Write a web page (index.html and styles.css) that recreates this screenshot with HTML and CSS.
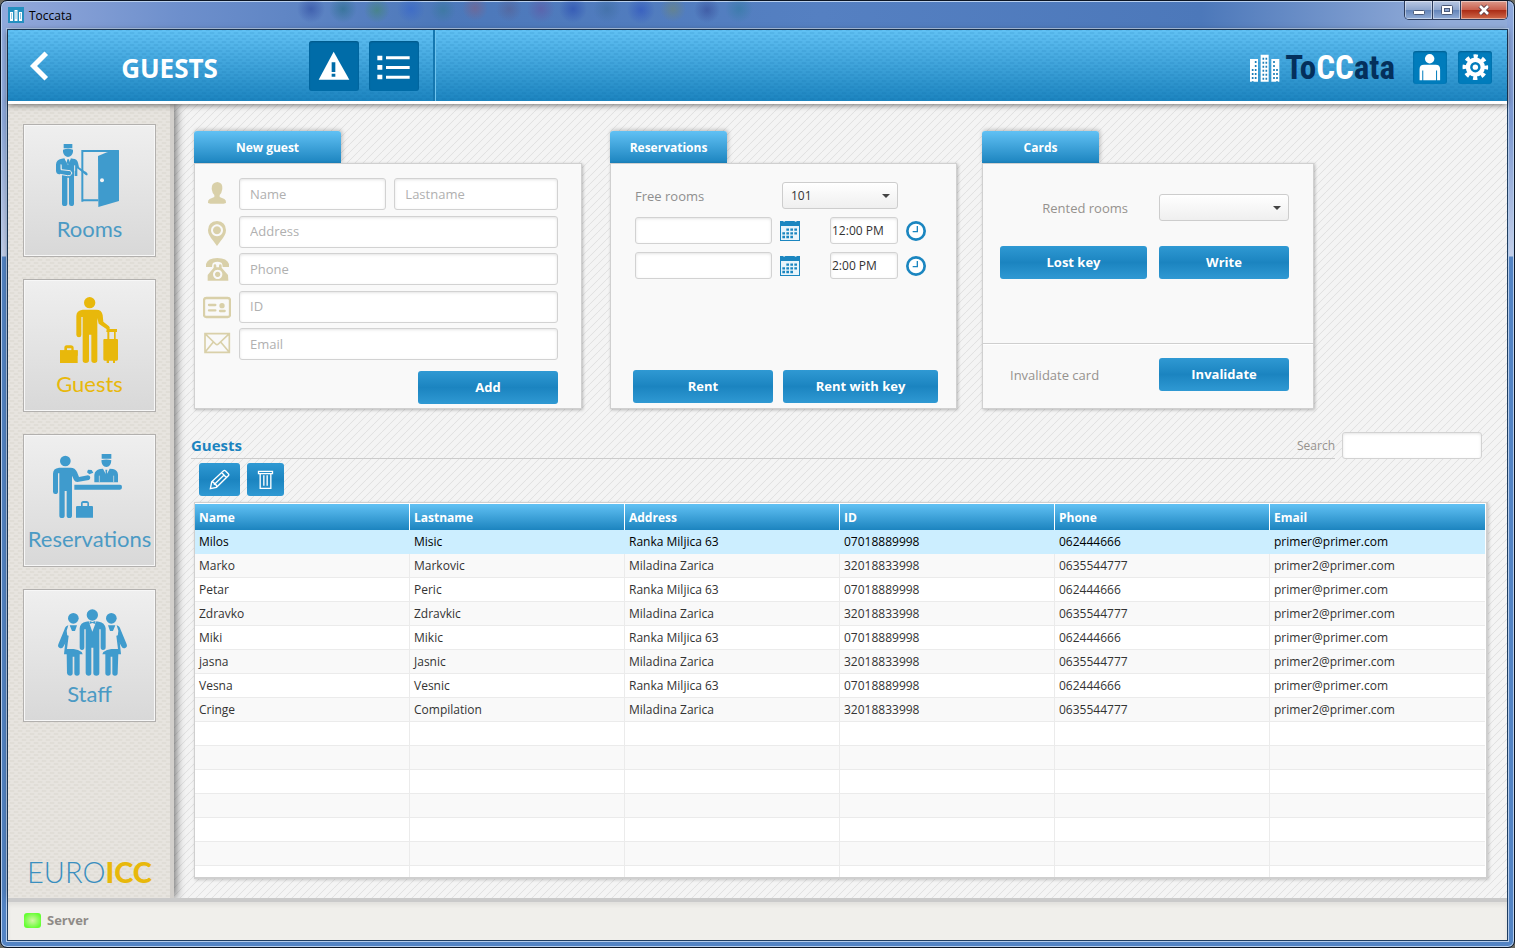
FILE: index.html
```html
<!DOCTYPE html>
<html lang="en">
<head>
<meta charset="utf-8">
<title>Toccata</title>
<link rel="stylesheet" href="styles.css">
</head>
<body>
<div class="window">
  <div class="titlebar">
    <svg class="app-icon" viewBox="0 0 16 16" aria-hidden="true">
      <rect width="16" height="16" fill="#2490c0"/>
      <path d="M2 5h3v9H2zM6.500 3h3v11h-3zM11 5h3v9h-3z" fill="#fff"/>
      <path d="M3 7h1M3 9h1M3 11h1M7.500 5h1M7.500 7h1M7.500 9h1M7.500 11h1M12 7h1M12 9h1M12 11h1" stroke="#2490c0"/>
    </svg>
    <span class="window-name">Toccata</span>
    <div class="window-buttons">
      <button class="win-btn" aria-label="Minimize"><svg width="14" height="12" viewBox="0 0 14 12"><rect x="1.500" y="6.500" width="11" height="4" rx="1" fill="#fff" stroke="#4b5a78"/></svg></button>
      <button class="win-btn" aria-label="Maximize"><svg width="14" height="12" viewBox="0 0 14 12"><rect x="1.500" y="1.500" width="11" height="9" rx="1" fill="#fff" stroke="#4b5a78"/><rect x="4.500" y="4.500" width="5" height="3" fill="#8ea6d0" stroke="#4b5a78"/></svg></button>
      <button class="win-btn win-close" aria-label="Close"><svg width="14" height="12" viewBox="0 0 14 12"><path d="M3 2l8 8M11 2l-8 8" stroke="#5b3a44" stroke-width="4.500"/><path d="M3 2l8 8M11 2l-8 8" stroke="#fff" stroke-width="2.600"/></svg></button>
    </div>
  </div>

  <div class="client">
    <header class="header">
      <div class="header-left">
        <button class="back" aria-label="Back"><svg width="20" height="32" viewBox="0 0 20 32"><path d="M15.500 5L4.500 16l11 11" fill="none" stroke="#fff" stroke-width="5" stroke-linecap="square" stroke-linejoin="miter"/></svg></button>
        <h1 class="page-title">GUESTS</h1>
        <button class="head-btn" aria-label="Alerts"><svg viewBox="927 123 150 150"><path d="M1001 155l47 84h-92z" fill="#fff"/><path d="M995 187h11v29h-11zM995 221h11v9h-11z" fill="#006ca8"/></svg></button>
        <button class="head-btn" aria-label="List"><svg viewBox="1107 123 150 150"><path d="M1132 167h15v14h-15zM1132 195h15v14h-15zM1132 224h15v14h-15zM1158 169h71v9h-71zM1158 198h71v9h-71zM1158 227h71v9h-71z" fill="#fff"/></svg></button>
      </div>
      <div class="header-right">
        <div class="logo">
          <svg class="logo-mark" viewBox="114 157 90 84" aria-hidden="true">
            <path d="M114 172h24v68h-24zM146 159h24v81h-24zM178 172h24v68h-24z" fill="#fff"/>
            <g stroke="#1d7fb8" stroke-width="5" stroke-dasharray="6 6"><path d="M131 178v60M122 202v38M154 168v70M163 168v70M186 178v60M195 202v38"/></g>
          </svg>
          <span class="logo-text">To<span class="logo-white">CC</span>ata</span>
        </div>
        <button class="small-btn" aria-label="User"><svg viewBox="596 154 100 98"><circle cx="645" cy="177" r="14" fill="#fff"/><path d="M615 241v-33q0-13 13-13h35q13 0 13 13v33h-9v-29h-3v29h-38v-29h-3v29z" fill="#fff"/></svg></button>
        <button class="small-btn" aria-label="Settings"><svg viewBox="731 154 100 98"><circle cx="782" cy="202" r="31" fill="none" stroke="#fff" stroke-width="14" stroke-dasharray="12.200 12.150" stroke-dashoffset="6"/><circle cx="782" cy="202" r="22" fill="none" stroke="#fff" stroke-width="13"/><circle cx="782" cy="202" r="8" fill="#fff"/></svg></button>
      </div>
    </header>

    <div class="middle">
      <nav class="sidebar">
        <a class="tile" href="#rooms">
          <svg viewBox="162 126 213 210" fill="#3f9bcd" aria-hidden="true">
            <path d="M191 132h26v13h-26zM189 149q15-5 30 0v7q-3 14-15 15-12-1-15-15z"/>
            <path d="M247 305V153h108M247 301h48" fill="none" stroke="#3f9bcd" stroke-width="6"/>
            <path d="M294 168l27-11 36-7v153l-62 18z"/><circle cx="306" cy="241" r="6" fill="#f4f4f4"/>
            <path d="M186 224h36v87q0 7-8 7-7 0-7-7v-78h-5v78q0 7-8 7t-8-7z"/>
            <path d="M185 176q-17 3-17 18v18q0 9 10 11l27 5q11 0 11-10-1-5-6-5l-27-3v-15l4 1v10l37 3v19h8v-23l25 20q8 4 5-5-3-4-8-6l-17-12-3-14q-3-12-15-12l-8-1-7 18-10-18z"/>
            <path d="M184 190l38 0v37h-36v-8z"/>
            <path d="M193 175l11 21 9-21z" fill="#ececec"/>
            <path d="M202 178h5l2 9-5 9-4-9z"/>
            <path d="M183 193v16l27 3q7 3 5 10-4 7-13 5l-22-4M224 196v16" fill="none" stroke="#ececec" stroke-width="3"/>
          </svg>
          <span>Rooms</span>
        </a>
        <a class="tile active" href="#guests">
          <svg viewBox="162 591 213 210" fill="#e8b80b" aria-hidden="true">
            <circle cx="269" cy="608" r="17"/>
            <path d="M248 629h41q16 0 19 16l2 20 17 14q6 8-2 9-5 1-9-3l-20-14-4-17v127q0 8-9 8t-9-8v-77h-7v77q0 8-10 8-9 0-9-8V651h-4v54q0 7-7 7t-8-7v-57q0-17 19-19z"/>
            <path d="M320 687h31v9h-4v21h-5v-21h-14v21h-6v-21h-3zM313 717h38q3 0 3 3v58q0 4-4 4h-5v7h-6v-7h-12v7h-7v-7h-6q-4 0-4-4v-58q0-3 3-3zM180 751h13v-7q0-8 7-8h12q9 0 9 8v7h12v16h-53zm21 0h13v-6h-13z" fill-rule="evenodd"/>
            <path d="M180 751h53v38h-53z"/>
          </svg>
          <span>Guests</span>
        </a>
        <a class="tile" href="#reservations">
          <svg viewBox="162 96 213 210" fill="#3f9bcd" aria-hidden="true">
            <circle cx="196" cy="123" r="16"/>
            <path d="M177 143h35q13 0 19 13l6 15 27-5q9 1 6 10-2 5-8 5l-30 5q-7 0-10-6l-6-13v120q0 7-8 7t-8-7v-74h-6v74q0 7-8 7t-8-7V160h-4v55q0 7-8 7-7 0-7-7v-54q0-16 18-18z"/>
            <path d="M264 149l11 1 5 8-12 5-7-6zM223 194h137q6 0 6 7 0 8-6 8H223zM305 102h29v14h-29zM304 121q15-5 30 0-1 20-15 20t-15-20z"/>
            <path d="M300 147l9-1 10 20 10-20 10 1q14 3 15 17v23h-71v-23q2-14 17-17z"/>
            <path d="M298 186v-19M341 186v-19" stroke="#e7e7e7" stroke-width="2"/><path d="M316 149h6l-1 8 2 12-4 8-4-8 2-12z"/>
            <path d="M232 258h11v-7q0-8 7-8h9q8 0 8 8v7h9q3 0 3 3v32h-51v-32q0-3 4-3zm16 0h14v-9h-14z" fill-rule="evenodd"/>
          </svg>
          <span>Reservations</span>
        </a>
        <a class="tile" href="#staff">
          <svg viewBox="162 561 213 210" fill="#3f9bcd" aria-hidden="true">
            <circle cx="277" cy="585" r="17"/><circle cx="220" cy="595" r="16"/><circle cx="334" cy="595" r="16"/>
            <path d="M205 616l-5 16 3 26-13 22q-4 7-11 4-7-3-4-11l18-44q4-12 12-13zM350 616l5 16-3 26 13 22q4 7 11 4 7-3 4-11l-18-44q-4-12-12-13z"/>
            <path d="M209 616h22l-6 17h-9zM324 616h22l-7 17h-9zM198 645l8 2-5 40h20q14 1 24 9l3 7h-56zM357 645l-8 2 5 40h-20q-14 1-24 9l-3 7h56z"/>
            <path d="M200 699h39v61q0 7-8 7t-8-7v-50h-5v50q0 7-8 7t-9-7zM316 699h39l-2 61q0 7-8 7t-8-7v-50h-5v50q0 7-8 7t-8-7z"/>
            <path d="M258 605l8-1 11 31 12-31 8 1q17 2 20 20v57q0 8-8 8-7 0-7-8v-54h-4v131q0 8-9 8t-9-8v-76h-6v76q0 8-8 8t-9-8V628h-4v54q0 8-7 8t-7-8v-57q2-18 19-20zM269 603l8 3 9-3v9l-9-3-8 3z"/>
          </svg>
          <span>Staff</span>
        </a>
        <div class="vendor"><span>EURO</span><b>ICC</b></div>
      </nav>

      <main class="main">
        <div class="cards">
          <section class="card card-guest">
            <h2 class="tab tab-wide">New guest</h2>
            <form class="card-body">
              <div class="fields">
                <div class="field">
                  <svg viewBox="54 174 84 96" fill="#d9d0a9" aria-hidden="true"><path d="M97 186q17 2 15 21-2 13-8 18v6l14 6q6 3 5 12l-7 2H76l-7-2q-1-9 5-12l14-6v-6q-6-5-8-18-1-19 17-21z"/></svg>
                  <input class="text-input name" type="text" placeholder="Name" aria-label="Name">
                  <input class="text-input lastname" type="text" placeholder="Lastname" aria-label="Lastname">
                </div>
                <div class="field">
                  <svg viewBox="54 285 84 96" fill="#d9d0a9" aria-hidden="true"><path d="M96 300q27 2 27 28 0 14-16 32l-11 15-11-15q-16-18-16-32 0-26 27-28zm0 10a18 18 0 1 0 .1 0zm0 6a12 12 0 1 1-.1 0z" fill-rule="evenodd"/></svg>
                  <input class="text-input" type="text" placeholder="Address" aria-label="Address">
                </div>
                <div class="field">
                  <svg viewBox="54 399 84 96" fill="#d9d0a9" aria-hidden="true"><path d="M63 441v-9q5-18 34-18t35 18v9h-19q-1-12-4-13-12-5-24 0-3 1-4 13z"/><path d="M86 437q0-4 4-4t4 4v5h8v-5q0-4 4-4t4 4v6l19 22 1 17H68v-17l18-22zm12 12a14 14 0 1 0 .1 0zm0 6a8 8 0 1 1-.1 0z" fill-rule="evenodd"/></svg>
                  <input class="text-input" type="tel" placeholder="Phone" aria-label="Phone">
                </div>
                <div class="field">
                  <svg viewBox="54 510 84 96" fill="#d9d0a9" aria-hidden="true"><rect x="57" y="531" width="78" height="57" rx="7" fill="none" stroke="#d9d0a9" stroke-width="7"/><circle cx="111" cy="554" r="8"/><path d="M72 552h19M72 568h19M105 570h14" stroke="#d9d0a9" stroke-width="7" stroke-linecap="round"/></svg>
                  <input class="text-input" type="text" placeholder="ID" aria-label="ID">
                </div>
                <div class="field">
                  <svg viewBox="54 624 84 96" fill="none" stroke="#d9d0a9" stroke-width="5" aria-hidden="true"><path d="M60 641h73v56H60zM60 641l32 31q4 4 8 0l33-31M60 697l25-31M133 697l-26-31"/></svg>
                  <input class="text-input" type="email" placeholder="Email" aria-label="Email">
                </div>
              </div>
              <button class="btn btn-add" type="button">Add</button>
            </form>
          </section>

          <section class="card card-res">
            <h2 class="tab">Reservations</h2>
            <form class="card-body">
              <div class="res-grid">
                <label class="free-label" for="free">Free rooms</label>
                <span class="select free-select"><select id="free"><option>101</option></select></span>
                <input class="text-input short" type="text" aria-label="Start date">
                <button class="icon-btn" type="button" aria-label="Pick start date"><svg viewBox="540 303 60 60"><path d="M540 303h9q3 5 7 0h27q4 5 8 0h9v60h-60z" fill="#1b86c0"/><path d="M543 318h54v42h-54z" fill="#e9f4fa"/><path d="M559 329h36M547 340h48M547 351h36" stroke="#1b86c0" stroke-width="7" stroke-dasharray="8 4"/></svg></button>
                <input class="text-input short time" type="text" value="12:00 PM" aria-label="Start time">
                <button class="icon-btn" type="button" aria-label="Pick start time"><svg viewBox="918 306 60 60"><circle cx="948" cy="336" r="26" fill="#fff" stroke="#1b86c0" stroke-width="8"/><path d="M952 321v17h-14" fill="none" stroke="#1b86c0" stroke-width="4"/></svg></button>
                <input class="text-input short" type="text" aria-label="End date">
                <button class="icon-btn" type="button" aria-label="Pick end date"><svg viewBox="540 303 60 60"><path d="M540 303h9q3 5 7 0h27q4 5 8 0h9v60h-60z" fill="#1b86c0"/><path d="M543 318h54v42h-54z" fill="#e9f4fa"/><path d="M559 329h36M547 340h48M547 351h36" stroke="#1b86c0" stroke-width="7" stroke-dasharray="8 4"/></svg></button>
                <input class="text-input short time" type="text" value="2:00 PM" aria-label="End time">
                <button class="icon-btn" type="button" aria-label="Pick end time"><svg viewBox="918 306 60 60"><circle cx="948" cy="336" r="26" fill="#fff" stroke="#1b86c0" stroke-width="8"/><path d="M952 321v17h-14" fill="none" stroke="#1b86c0" stroke-width="4"/></svg></button>
              </div>
              <div class="res-actions">
                <button class="btn btn-rent" type="button">Rent</button>
                <button class="btn btn-rent-key" type="button">Rent with key</button>
              </div>
            </form>
          </section>

          <section class="card card-cards">
            <h2 class="tab">Cards</h2>
            <form class="card-body">
              <div class="key-grid">
                <label class="rented-label" for="rented">Rented rooms</label>
                <span class="select"><select id="rented"><option></option></select></span>
                <button class="btn" type="button">Lost key</button>
                <button class="btn" type="button">Write</button>
              </div>
              <div class="key-grid invalidate">
                <span class="invalidate-label">Invalidate card</span>
                <button class="btn" type="button">Invalidate</button>
              </div>
            </form>
          </section>
        </div>

        <div class="list-head">
          <div class="list-title">
            <h2>Guests</h2>
            <label for="search">Search</label>
          </div>
          <input class="text-input short" id="search" type="search">
        </div>
        <div class="toolbar">
          <button class="btn tool-edit" aria-label="Edit"><svg width="21" height="21" viewBox="88 148 62 62" fill="none" stroke="#fff" stroke-width="4"><path d="M92 206l4-20 35-33q3-2 6 1l8 8q3 3 0 6l-35 34zM96 186q8 0 8 7 7 0 7 9M126 159l13 14M105 192l26-25"/></svg></button>
          <button class="btn tool-delete" aria-label="Delete"><svg width="17" height="20" viewBox="232 148 50 60" fill="none" stroke="#fff" stroke-width="4"><path d="M236 152h42v7h-42zM241 160v43h32v-43M252 164v31M262 164v31"/></svg></button>
        </div>

        <div class="table-wrap">
          <table>
            <thead><tr><th>Name</th><th>Lastname</th><th>Address</th><th>ID</th><th>Phone</th><th>Email</th></tr></thead>
            <tbody>
              <tr class="selected"><td>Milos</td><td>Misic</td><td>Ranka Miljica 63</td><td>07018889998</td><td>062444666</td><td>primer@primer.com</td></tr>
              <tr><td>Marko</td><td>Markovic</td><td>Miladina Zarica</td><td>32018833998</td><td>0635544777</td><td>primer2@primer.com</td></tr>
              <tr><td>Petar</td><td>Peric</td><td>Ranka Miljica 63</td><td>07018889998</td><td>062444666</td><td>primer@primer.com</td></tr>
              <tr><td>Zdravko</td><td>Zdravkic</td><td>Miladina Zarica</td><td>32018833998</td><td>0635544777</td><td>primer2@primer.com</td></tr>
              <tr><td>Miki</td><td>Mikic</td><td>Ranka Miljica 63</td><td>07018889998</td><td>062444666</td><td>primer@primer.com</td></tr>
              <tr><td>jasna</td><td>Jasnic</td><td>Miladina Zarica</td><td>32018833998</td><td>0635544777</td><td>primer2@primer.com</td></tr>
              <tr><td>Vesna</td><td>Vesnic</td><td>Ranka Miljica 63</td><td>07018889998</td><td>062444666</td><td>primer@primer.com</td></tr>
              <tr><td>Cringe</td><td>Compilation</td><td>Miladina Zarica</td><td>32018833998</td><td>0635544777</td><td>primer2@primer.com</td></tr>
              <tr><td></td><td></td><td></td><td></td><td></td><td></td></tr>
              <tr><td></td><td></td><td></td><td></td><td></td><td></td></tr>
              <tr><td></td><td></td><td></td><td></td><td></td><td></td></tr>
              <tr><td></td><td></td><td></td><td></td><td></td><td></td></tr>
              <tr><td></td><td></td><td></td><td></td><td></td><td></td></tr>
              <tr><td></td><td></td><td></td><td></td><td></td><td></td></tr>
              <tr><td></td><td></td><td></td><td></td><td></td><td></td></tr>
            </tbody>
          </table>
        </div>
      </main>
    </div>

    <footer class="footer"><span class="led"></span><span>Server</span></footer>
  </div>
</div>
</body>
</html>
```

FILE: styles.css
```css
* { box-sizing: border-box; }

body {
  margin: 0;
  background: #6a6a62;
  font-family: "Open Sans", "Noto Sans", sans-serif;
  font-size: 12px;
  color: #333;
}

h1, h2 { margin: 0; }
button, input, select { font: inherit; }
button { padding: 0; border: 0; cursor: pointer; }

/* Window frame */
.window {
  display: flex;
  flex-direction: column;
  height: 100vh;
  min-height: 760px;
  padding: 0 6px 6px;
  border: 1px solid #0b1524;
  border-radius: 7px;
  box-shadow: inset 0 0 0 1px #b9d0ee;
  background:
    linear-gradient(#8fa9dc, #8fabdc 120px, #c3cfe9 255px, transparent 256px) left top / 7px 100% no-repeat,
    linear-gradient(#8fa9dc, #7b98d0 120px, #c3cfe9 255px, transparent 256px) right top / 7px 100% no-repeat,
    linear-gradient(90deg, #93a9db, #6d8fcc 180px, #4c78ba 440px, #5580c2 820px, #4c78ba 1200px, #91abd8 1440px) left top / 100% 29px no-repeat,
    #5384c4;
}

.titlebar {
  display: flex;
  align-items: center;
  flex: none;
  gap: 5px;
  height: 28px;
  padding-left: 1px;
  background:
    radial-gradient(circle at 304px 8px, #253f9a80, transparent 14px),
    radial-gradient(circle at 336px 8px, #1d6a7a80, transparent 14px),
    radial-gradient(circle at 370px 9px, #3d8a5a80, transparent 13px),
    radial-gradient(circle at 404px 8px, #2f5fd080, transparent 14px),
    radial-gradient(circle at 436px 9px, #2f7a8a70, transparent 13px),
    radial-gradient(circle at 468px 7px, #8a5a7a80, transparent 13px),
    radial-gradient(circle at 502px 8px, #5a5a8a80, transparent 13px),
    radial-gradient(circle at 534px 8px, #6a4a9a70, transparent 14px),
    radial-gradient(circle at 566px 8px, #2040b080, transparent 14px),
    radial-gradient(circle at 600px 8px, #3a6a9a80, transparent 14px),
    radial-gradient(circle at 634px 9px, #2448c080, transparent 14px),
    radial-gradient(circle at 666px 8px, #7a8a5a70, transparent 13px),
    radial-gradient(circle at 700px 9px, #30409080, transparent 13px),
    radial-gradient(circle at 732px 8px, #2a7a9a80, transparent 14px),
    radial-gradient(ellipse at 43px 15px, #ffffffb0, transparent 44px);
}
.app-icon { width: 16px; height: 16px; }
.window-name { color: #000; }
.window-buttons {
  display: flex;
  align-self: flex-start;
  margin-left: auto;
  border: 1px solid #2c3c5c;
  border-top: 0;
  border-radius: 0 0 5px 5px;
  overflow: hidden;
}
.win-btn {
  display: grid;
  place-items: center;
  width: 28px;
  height: 18px;
  border-right: 1px solid #2c3c5c;
  background: linear-gradient(#b9c9e4, #8ea6cd 48%, #6283b8 50%, #93aed8);
  box-shadow: inset 0 0 0 1px #ffffff70;
}
.win-close {
  width: 46px;
  border-right: 0;
  background: linear-gradient(#dc9a8c, #c9604e 48%, #a92a14 50%, #d0694a);
}

.client {
  display: flex;
  flex-direction: column;
  flex: 1;
  min-height: 0;
  border: 1px solid #1f3d60;
  box-shadow: 0 0 0 1px #b4cbea;
  background: #f3f3f3;
}

/* Header */
.header {
  position: relative;
  z-index: 2;
  display: flex;
  flex: none;
  justify-content: space-between;
  border-bottom: 3px solid #fff;
  box-shadow: 0 1px 6px #00000090;
  background:
    radial-gradient(ellipse 3px 1px, #005a961a 90%, transparent) 0 0 / 8px 6px,
    radial-gradient(ellipse 3px 1px, #005a961a 90%, transparent) 4px 3px / 8px 6px,
    linear-gradient(#61c1f4, #1c84bf);
}
.header-left {
  display: grid;
  grid-template-columns: 62px 1fr 50px 50px;
  align-items: center;
  gap: 10px;
  width: 427px;
  padding: 11px 14px 10px 0;
  border-right: 2px solid #1577b0;
  box-shadow: 1px 0 #6fc4ee;
}
.back { display: grid; place-items: center; background: none; }
.page-title {
  padding: 4px 40px 0 0;
  color: #fff;
  font-size: 26px;
  line-height: 32px;
  text-align: center;
}
.head-btn, .small-btn {
  border-radius: 3px;
  background: #006ca8;
  box-shadow: inset 0 1px 2px #00466e90;
}
.head-btn { width: 50px; height: 50px; }
.small-btn { width: 34px; height: 33px; background: #007cbc; }
.head-btn svg, .small-btn svg { display: block; width: 100%; height: 100%; }
.header-right {
  display: flex;
  align-items: center;
  gap: 11px;
  padding: 4px 15px 0 0;
}
.logo { display: flex; align-items: center; gap: 5px; margin-right: 7px; }
.logo-mark { width: 30px; height: 28px; }
.logo-text {
  color: #04305c;
  font: bold 33px/32px "Roboto Condensed", Roboto, sans-serif;
}
.logo-white { color: #fff; }

/* Sidebar */
.middle { display: flex; flex: 1; min-height: 0; }
.sidebar {
  position: relative;
  z-index: 1;
  display: flex;
  flex-direction: column;
  flex: none;
  gap: 22px;
  width: 166px;
  padding: 20px 14px 10px 15px;
  border-right: 4px solid #d2cfcb;
  box-shadow: 2px 0 9px #00000090;
  background:
    radial-gradient(ellipse 3px 1px, #d9d5ce80 90%, transparent) 0 0 / 8px 6px,
    radial-gradient(ellipse 3px 1px, #d9d5ce80 90%, transparent) 4px 3px / 8px 6px,
    #e7e4df;
}
.tile {
  display: flex;
  flex-direction: column;
  align-items: center;
  gap: 2px;
  height: 133px;
  padding-top: 17px;
  border: 1px solid #b2b0ae;
  box-shadow: inset 0 0 0 1px #f7f7f7;
  background: linear-gradient(#efefef, #d8d8d8);
  color: #4b9ac4;
  font: 22px/30px Lato, sans-serif;
  text-decoration: none;
}
.tile.active { color: #e8b80b; }
.tile svg { flex: none; width: 71px; height: 70px; overflow: visible; }
.vendor {
  display: flex;
  justify-content: center;
  margin-top: auto;
  color: #3a8fbf;
  font: 300 29px/32px Lato, sans-serif;
}
.vendor b { color: #e8b80b; font-weight: 900; }

/* Main area */
.main {
  display: flex;
  flex-direction: column;
  flex: 1;
  min-width: 0;
  padding: 27px 19px 19px 17px;
  background: linear-gradient(135deg, transparent 43%, #e2e2e2 50%, transparent 57%) 0 0 / 8px 8px, #f4f4f4;
}
.cards { display: flex; padding-left: 3px; }
.card { display: flex; flex-direction: column; min-width: 0; }
.card-guest { flex: 0 1 388px; margin-right: 28px; }
.card-res { flex: 0 1 347px; margin-right: 25px; }
.card-cards { flex: 0 1 332px; }
.tab {
  width: 117px;
  height: 32px;
  border-radius: 3px 3px 0 0;
  background: linear-gradient(#61c1f4, #1c84bf);
  box-shadow: 1px -1px 4px #00000040;
  color: #fff;
  font-size: 12px;
  line-height: 34px;
  text-align: center;
}
.tab-wide { width: 147px; }
.card-body {
  display: flex;
  flex-direction: column;
  height: 246px;
  border: 1px solid #d0d0d0;
  box-shadow: 1px 1px 3px #00000040;
  background: #f9f9f9;
}
.card-guest .card-body { padding: 14px 23px 4px 8px; }
.fields { display: flex; flex: 1; flex-direction: column; justify-content: space-between; }
.field { display: flex; gap: 8px; }
.field svg { flex: none; width: 28px; height: 32px; }
.text-input {
  flex: 1;
  width: 100%;
  min-width: 0;
  height: 32px;
  padding: 0 10px 1px;
  border: 1px solid #d2d2d2;
  border-radius: 3px;
  box-shadow: inset 0 1px 3px #0000001c;
  background: #fff;
  color: #333;
  font-size: 13px;
}
.text-input::placeholder { color: #b0b0b0; opacity: 1; }
.text-input.name { flex: 146; }
.text-input.lastname { flex: 165; }
.text-input.short { height: 27px; }
.text-input.time { padding: 0 1px; font-size: 12px; }
.btn {
  height: 33px;
  padding-bottom: 2px;
  border-radius: 3px;
  background: linear-gradient(#2f99d3, #1b84c0 50%, #2f99d3);
  color: #fff;
  font-size: 13px;
  font-weight: bold;
}
.btn-add { align-self: flex-end; width: 140px; margin-top: 11px; }

.card-res .card-body { justify-content: space-between; padding: 18px 18px 5px 22px; }
.res-grid {
  display: grid;
  grid-template-columns: 137px 42px 68px 20px;
  align-items: center;
  gap: 8px;
  padding-left: 2px;
  color: #8f8f8f;
  font-size: 13px;
}
.free-select { grid-column: 2 / 4; margin-left: 2px; }
.free-label { grid-column: 1; }
.res-grid .select + * { grid-column: 1; }
.icon-btn { width: 20px; height: 20px; background: none; }
.icon-btn svg { display: block; width: 20px; height: 20px; }
.res-actions { display: grid; grid-template-columns: 140fr 155fr; gap: 10px; }

.select { position: relative; display: block; }
.select::after {
  content: "";
  position: absolute;
  top: 12px;
  right: 8px;
  border: 4px solid transparent;
  border-top-color: #444;
  border-bottom: 0;
  pointer-events: none;
}
.select select {
  display: block;
  width: 100%;
  height: 27px;
  padding: 0 8px;
  border: 1px solid #cdcdcd;
  border-radius: 3px;
  appearance: none;
  background: linear-gradient(#fff, #efefef);
  color: #333;
  font-size: 12px;
}

.key-grid {
  display: grid;
  grid-template-columns: 147fr 130fr;
  align-content: start;
  align-items: center;
  flex: 1;
  gap: 25px 12px;
  padding: 30px 24px 0 17px;
  color: #96928e;
  font-size: 13px;
}
.rented-label { padding-right: 19px; text-align: right; }
.key-grid.invalidate {
  flex: none;
  height: 65px;
  padding-top: 14px;
  border-top: 1px solid #cfcfcf;
  box-shadow: inset 0 1px #fff;
}
.invalidate-label { padding-left: 10px; }

.list-head { display: flex; gap: 7px; margin-top: 23px; padding-right: 6px; }
.list-title {
  display: flex;
  flex: 1;
  align-items: center;
  justify-content: space-between;
  border-bottom: 1px solid #cbcbcb;
  color: #96928e;
}
.list-title h2 { color: #1b84c0; font-size: 15px; line-height: 20px; }
.list-head .text-input { flex: none; width: 140px; }
.toolbar { display: flex; gap: 7px; padding: 4px 0 6px 8px; }
.toolbar .btn { display: grid; place-items: center; padding: 0; }
.tool-edit { width: 41px; }
.tool-delete { width: 37px; }

/* Guest table */
.table-wrap {
  flex: 1 1 0;
  min-height: 0;
  margin-left: 3px;
  padding: 1px 1px 0 0;
  overflow: hidden;
  border: 1px solid #cfcfcf;
  border-width: 1px 2px 2px 1px;
  box-shadow: 1px 1px 3px #00000030;
  background: #fff;
}
table { width: 100%; border-collapse: separate; border-spacing: 0; table-layout: fixed; }
th {
  height: 26px;
  padding: 0 4px;
  border-right: 1px solid #fff;
  background: linear-gradient(#61c1f4, #1c84bf);
  color: #fff;
  text-align: left;
}
td {
  height: 24px;
  padding: 0 4px;
  border-right: 1px solid #ebebeb;
  border-bottom: 1px solid #ebebeb;
  line-height: 16px;
}
tr:nth-child(even) td { background: #f9f9f9; }
.selected td { border-color: #cceeff; background: #cceeff; color: #000; }
th:last-child, td:last-child { border-right: 0; }

.footer {
  display: flex;
  align-items: center;
  flex: none;
  gap: 6px;
  height: 42px;
  padding: 0 0 2px 16px;
  border-top: 4px solid #cacaca;
  box-shadow: inset 0 3px 4px #00000010;
  position: relative;
  z-index: 2;
  background: #f0efeb;
  color: #8f8b87;
  font-size: 13px;
  font-weight: bold;
}
.led {
  width: 17px;
  height: 15px;
  border-radius: 3px;
  background: radial-gradient(#d4f5a8, #66ff33 75%);
}
```
